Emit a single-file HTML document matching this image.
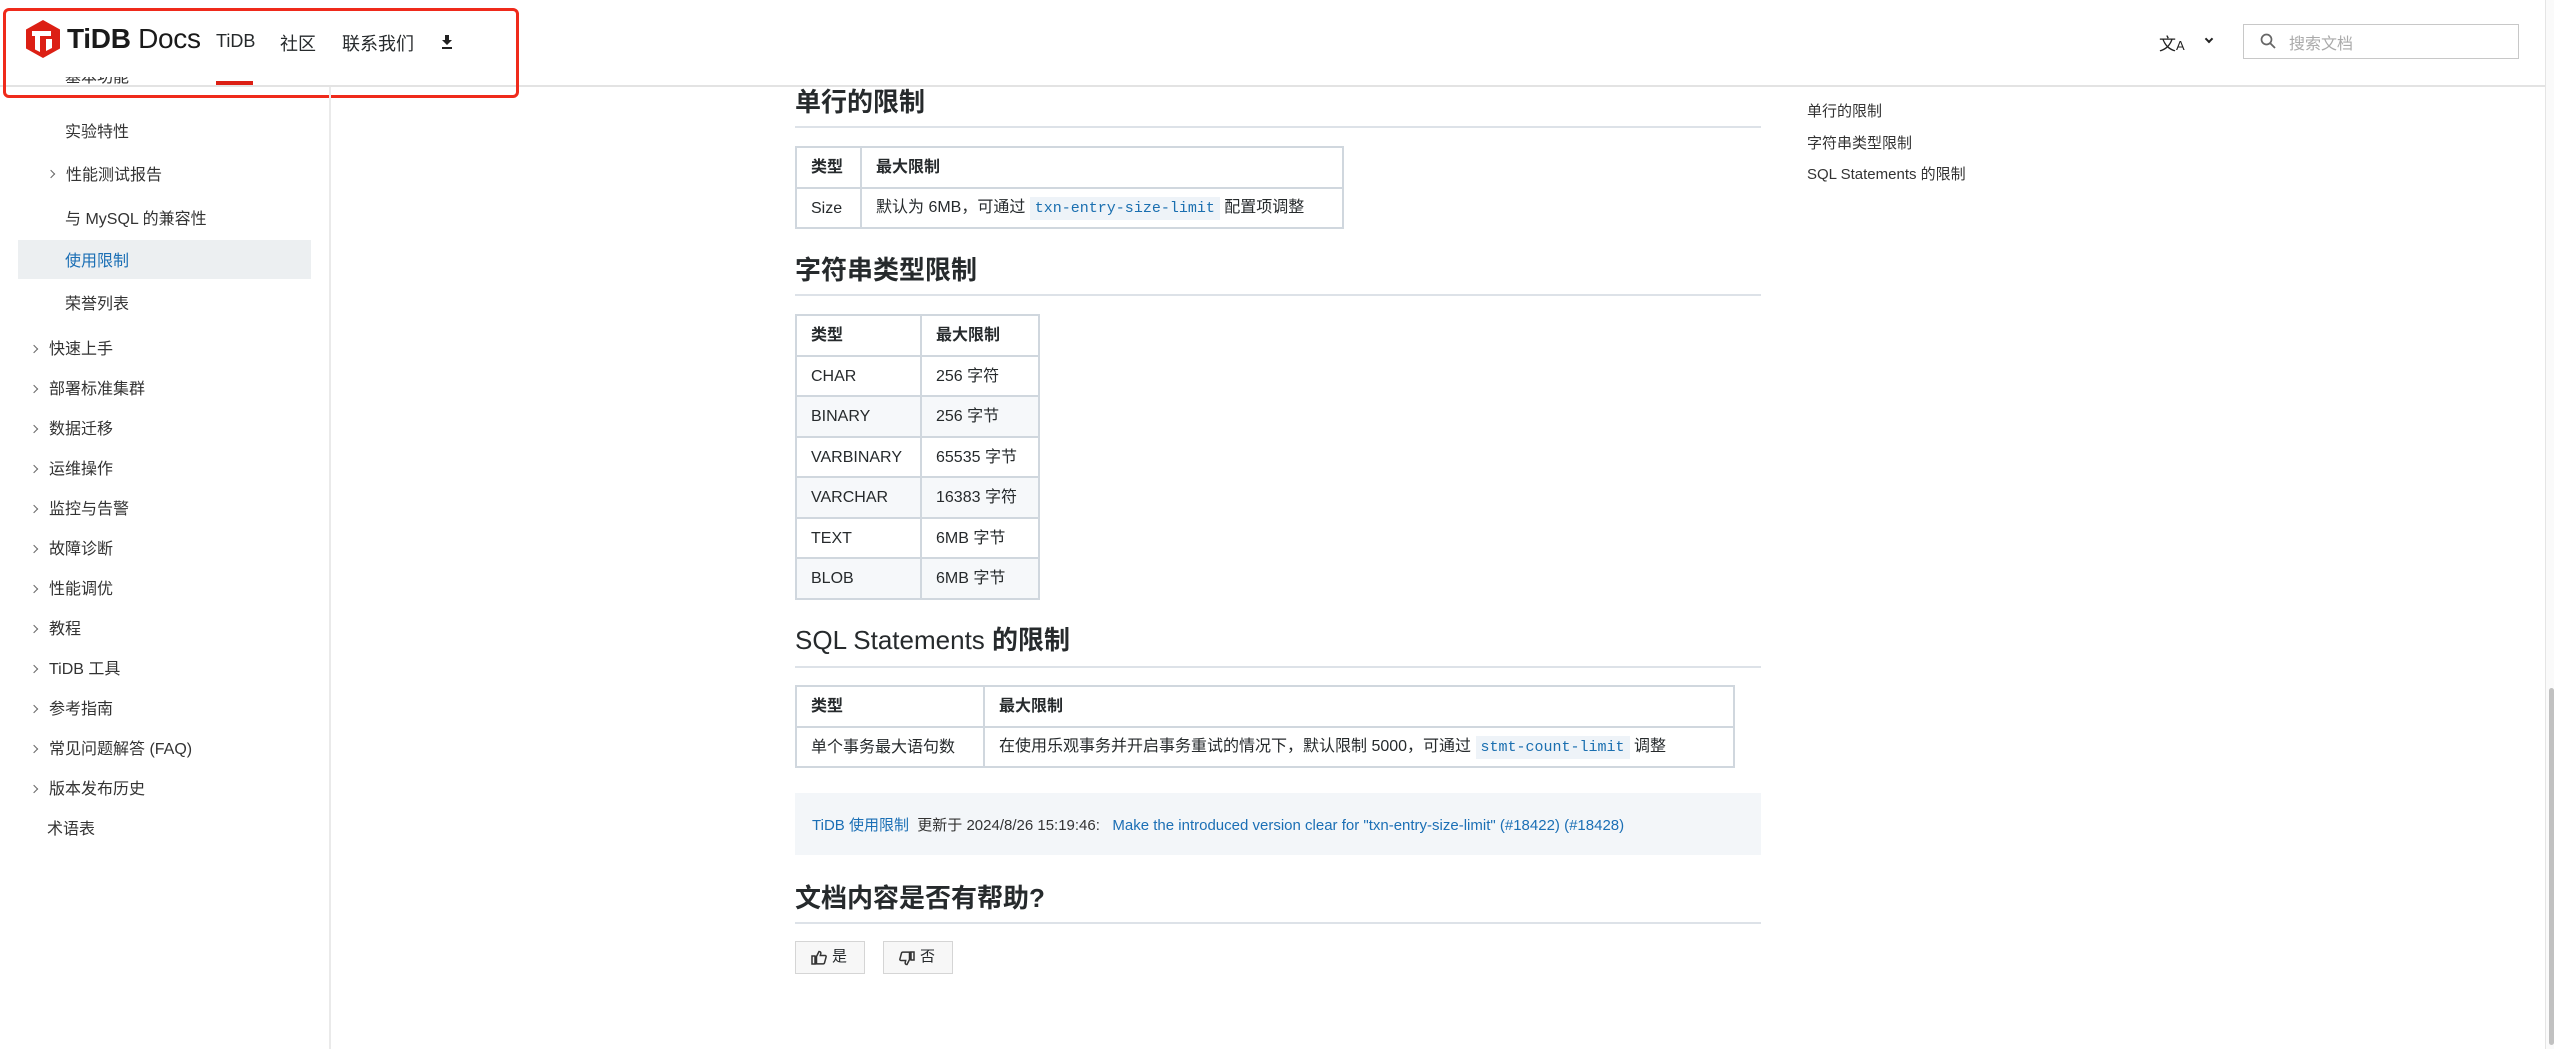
<!DOCTYPE html>
<html><head><meta charset="utf-8"><style>
*{margin:0;padding:0;box-sizing:border-box}
body{width:2554px;height:1049px;background:#fff;position:relative;overflow:hidden;font-family:"Liberation Sans","Noto Sans CJK SC",sans-serif;color:#262a2c}
.a{position:absolute;white-space:nowrap}
.side{font-size:16px;color:#333;line-height:22px;margin-top:3px}
.chev{position:absolute;width:6px;height:6px;border-right:1.3px solid #666;border-top:1.3px solid #666;transform:rotate(45deg)}
h2{position:absolute;font-size:26px;font-weight:700;color:#262a2c;white-space:nowrap;line-height:32px}
.rule{position:absolute;height:2px;background:#dde2e8;left:795px;width:966px}
table{position:absolute;border-collapse:collapse;font-size:16px;color:#262a2c}
td,th{border:2px solid #d0d7de;padding:2px 14px 0;height:40.5px;line-height:20px;text-align:left;white-space:nowrap;vertical-align:middle}
th{font-weight:700}
tr.s td{background:#f6f8fa}
code{font-family:"Liberation Mono",monospace;color:#1a6fb0;background:#eef3f8;padding:3px 5px;font-size:15px;line-height:20px}
.btn{position:absolute;top:941px;width:70px;height:33px;border:1.5px solid #d5d5d5;background:#f7f7f7;font-size:15px;line-height:30px}
</style></head><body>
<!-- header -->
<div class="a" style="left:0;top:85px;width:2545px;height:2px;background:#e3e3e3"></div>
<svg class="a" style="left:24px;top:18px" width="40" height="44" viewBox="22 18 40 44">
<polygon points="41,20 58,29.5 58,48.5 41,58 24,48.5 24,29.5" fill="#dc1f14"/>
<path d="M30 31 L49 31 L49 36 L38 36 L38 52 L33 49.5 L33 36 L30 36 Z" fill="#fff"/>
<path d="M44 39 L50 39 L50 48 L44 51 Z" fill="#fff"/>
</svg>
<div class="a" style="left:67px;top:23px;font-size:28px;font-weight:700;color:#1a1a1a;letter-spacing:-0.3px">TiDB <span style="font-weight:400">Docs</span></div>
<div class="a" style="left:216px;top:31px;font-size:18px;color:#262a2c">TiDB</div>
<div class="a" style="left:216px;top:81px;width:37px;height:4px;background:#dc1f14"></div>
<div class="a" style="left:280px;top:30px;font-size:18px;color:#262a2c">社区</div>
<div class="a" style="left:342px;top:30px;font-size:18px;color:#262a2c">联系我们</div>
<svg class="a" style="left:440px;top:34px" width="14" height="16" viewBox="0 0 14 16"><path d="M5 1h4v5h3L7 11 2 6h3z" fill="#222"/><rect x="2" y="13" width="10" height="2" fill="#222"/></svg>
<div class="a" style="left:3px;top:8px;width:516px;height:90px;border:3px solid #ef2a1b;border-radius:6px"></div>
<div class="a" style="left:2159px;top:30px;font-size:17px;color:#222">文<span style="font-size:13px">A</span></div>
<div class="chev" style="left:2206px;top:36px;transform:rotate(135deg);border-color:#222;border-width:2px"></div>
<div class="a" style="left:2243px;top:24px;width:276px;height:35px;border:1.5px solid #c8c8c8"></div>
<svg class="a" style="left:2260px;top:33px" width="16" height="16" viewBox="0 0 16 16"><circle cx="6.5" cy="6.5" r="5" fill="none" stroke="#666" stroke-width="1.7"/><path d="M10 10l5 5" stroke="#666" stroke-width="1.8"/></svg>
<div class="a" style="left:2289px;top:30px;font-size:16px;color:#aaa">搜索文档</div>
<!-- scrollbar -->
<div class="a" style="left:2545px;top:0;width:9px;height:1049px;background:#fafafa;border-left:1px solid #e5e5e5"></div>
<div class="a" style="left:2549px;top:688px;width:5px;height:357px;background:#c1c1c1;border-radius:3px"></div>
<!-- sidebar -->
<div class="a" style="left:329px;top:87px;width:2px;height:962px;background:#eaeaea"></div>
<div class="a side" style="left:65px;top:77px;height:10px;overflow:hidden;margin-top:0"><div style="margin-top:-10px">基本功能</div></div>
<div class="a side" style="left:65px;top:119px">实验特性</div>
<div class="chev" style="left:48px;top:171px"></div>
<div class="a side" style="left:66px;top:162px">性能测试报告</div>
<div class="a side" style="left:65px;top:206px">与 MySQL 的兼容性</div>
<div class="a" style="left:18px;top:240px;width:293px;height:39px;background:#eceff1"></div>
<div class="a side" style="left:65px;top:248px;color:#1b6fb5">使用限制</div>
<div class="a side" style="left:65px;top:291px">荣誉列表</div>
<div class="chev" style="left:31px;top:346px"></div><div class="a side" style="left:49px;top:336px">快速上手</div>
<div class="chev" style="left:31px;top:386px"></div><div class="a side" style="left:49px;top:376px">部署标准集群</div>
<div class="chev" style="left:31px;top:426px"></div><div class="a side" style="left:49px;top:416px">数据迁移</div>
<div class="chev" style="left:31px;top:466px"></div><div class="a side" style="left:49px;top:456px">运维操作</div>
<div class="chev" style="left:31px;top:506px"></div><div class="a side" style="left:49px;top:496px">监控与告警</div>
<div class="chev" style="left:31px;top:546px"></div><div class="a side" style="left:49px;top:536px">故障诊断</div>
<div class="chev" style="left:31px;top:586px"></div><div class="a side" style="left:49px;top:576px">性能调优</div>
<div class="chev" style="left:31px;top:626px"></div><div class="a side" style="left:49px;top:616px">教程</div>
<div class="chev" style="left:31px;top:666px"></div><div class="a side" style="left:49px;top:656px">TiDB 工具</div>
<div class="chev" style="left:31px;top:706px"></div><div class="a side" style="left:49px;top:696px">参考指南</div>
<div class="chev" style="left:31px;top:746px"></div><div class="a side" style="left:49px;top:736px">常见问题解答 (FAQ)</div>
<div class="chev" style="left:31px;top:786px"></div><div class="a side" style="left:49px;top:776px">版本发布历史</div>
<div class="a side" style="left:47px;top:816px">术语表</div>
<!-- TOC -->
<div class="a" style="left:1807px;top:100px;font-size:15px;color:#333">单行的限制</div>
<div class="a" style="left:1807px;top:132px;font-size:15px;color:#333">字符串类型限制</div>
<div class="a" style="left:1807px;top:163px;font-size:15px;color:#333">SQL Statements 的限制</div>
<!-- main -->
<h2 style="left:795px;top:86px">单行的限制</h2>
<div class="rule" style="top:126px"></div>
<table style="left:795px;top:146px;width:549px">
<tr><th style="width:65px">类型</th><th>最大限制</th></tr>
<tr><td>Size</td><td>默认为 6MB，可通过 <code>txn-entry-size-limit</code> 配置项调整</td></tr>
</table>
<h2 style="left:795px;top:254px">字符串类型限制</h2>
<div class="rule" style="top:294px"></div>
<table style="left:795px;top:314px;width:245px">
<tr><th style="width:125px">类型</th><th>最大限制</th></tr>
<tr><td>CHAR</td><td>256 字符</td></tr>
<tr class="s"><td>BINARY</td><td>256 字节</td></tr>
<tr><td>VARBINARY</td><td>65535 字节</td></tr>
<tr class="s"><td>VARCHAR</td><td>16383 字符</td></tr>
<tr><td>TEXT</td><td>6MB 字节</td></tr>
<tr class="s"><td>BLOB</td><td>6MB 字节</td></tr>
</table>
<h2 style="left:795px;top:624px;font-weight:400">SQL Statements <b>的限制</b></h2>
<div class="rule" style="top:666px"></div>
<table style="left:795px;top:685px;width:940px">
<tr><th style="width:188px">类型</th><th>最大限制</th></tr>
<tr><td>单个事务最大语句数</td><td>在使用乐观事务并开启事务重试的情况下，默认限制 5000，可通过 <code>stmt-count-limit</code> 调整</td></tr>
</table>
<div class="a" style="left:795px;top:793px;width:966px;height:62px;background:#f3f6f9"></div>
<div class="a" style="left:812px;top:814px;font-size:15px;color:#333"><span style="color:#1b6fb5">TiDB 使用限制</span>&nbsp;&nbsp;更新于 2024/8/26 15:19:46:&nbsp;&nbsp;&nbsp;<span style="color:#1b6fb5">Make the introduced version clear for "txn-entry-size-limit" (#18422) (#18428)</span></div>
<h2 style="left:795px;top:882px">文档内容是否有帮助?</h2>
<div class="rule" style="top:922px"></div>
<div class="btn" style="left:795px"><svg class="a" style="left:15px;top:8px" width="16" height="15" viewBox="0 0 16 15"><path d="M1 6h3v8H1zM5.5 6.5 8 1.5c1.3 0 2 .8 1.8 2L9.3 5.5H14c.8 0 1.3.7 1.1 1.4l-1.6 6c-.2.6-.7 1-1.3 1H5.5z" fill="none" stroke="#333" stroke-width="1.5"/></svg><span class="a" style="left:36px;top:0">是</span></div>
<div class="btn" style="left:883px"><svg class="a" style="left:15px;top:9px" width="16" height="15" viewBox="0 0 16 15"><g transform="rotate(180 8 7.5)"><path d="M1 6h3v8H1zM5.5 6.5 8 1.5c1.3 0 2 .8 1.8 2L9.3 5.5H14c.8 0 1.3.7 1.1 1.4l-1.6 6c-.2.6-.7 1-1.3 1H5.5z" fill="none" stroke="#333" stroke-width="1.5"/></g></svg><span class="a" style="left:36px;top:0">否</span></div>
</body></html>
